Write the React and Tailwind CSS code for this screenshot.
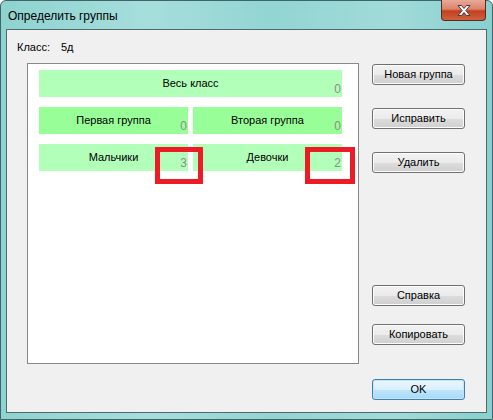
import React from "react";

function WinButton({ children, primary, className = "" }) {
  return (
    <div
      className={
        "h-[21px] w-[93px] rounded-[3px] border flex items-center justify-center text-[11px] text-black " +
        (primary
          ? "border-[#3c7fb1] bg-[linear-gradient(#eaf6fd_0%,#d9f0fc_50%,#bee6fd_51%,#a7d9f5_100%)] shadow-[inset_0_0_0_1px_#c4e5f6]"
          : "border-[#707070] bg-[linear-gradient(#f2f2f2_0%,#ebebeb_50%,#dddddd_51%,#cfcfcf_100%)] shadow-[inset_0_0_0_1px_#fcfcfc]") +
        " " +
        className
      }
    >
      {children}
    </div>
  );
}

function Tile({ label, count, bright, className = "" }) {
  return (
    <div
      className={
        "relative h-[27px] flex items-center justify-center text-[11px] text-black " +
        (bright ? "bg-[#98ff98]" : "bg-[#b2ffba]") +
        " " +
        className
      }
    >
      <span>{label}</span>
      <span className="absolute right-[1px] bottom-[1px] text-[12px] leading-[13px] text-[#8c8c8c]">
        {count}
      </span>
    </div>
  );
}

export default function App() {
  return (
    <div
      className="relative w-[493px] h-[420px] flex flex-col bg-[linear-gradient(90deg,#8ed3d1_0%,#a6dedc_30%,#92d5d3_55%,#a0dbd9_80%,#88d0ce_100%)] border border-[#3f6566] rounded-t-[6px]"
      style={{ fontFamily: '"Liberation Sans", Arial, sans-serif' }}
    >
      {/* title bar */}
      <div className="h-[28px] flex items-center pl-[7px] pt-[1px] text-[12px] text-black shrink-0">
        Определить группы
      </div>
      <div className="absolute top-[-1px] right-[6px] w-[45px] h-[21px] rounded-b-[4px] border border-t-0 border-[#5a2a22] bg-[linear-gradient(#eaa998_0%,#d9846e_45%,#c2401f_55%,#d0603f_100%)] flex items-center justify-center">
        <svg width="16" height="13" viewBox="0 0 16 13">
          <path
            d="M2 1.5h3.5L8 4.5l2.5-3H14l-4.2 5 4.2 5h-3.5L8 8.5l-2.5 3H2l4.2-5z"
            fill="#ffffff"
            stroke="#4a3a3a"
            strokeWidth="1"
            strokeLinejoin="round"
          />
        </svg>
      </div>

      {/* client area */}
      <div className="flex-1 mx-[5px] mb-[6px] border border-[#4e6a6c] bg-[#f0f0f0] flex flex-col">
        <div className="h-[33px] pt-[11px] pl-[10px] text-[11px] leading-[13px] text-black flex">
          <span className="w-[44px]">Класс:</span>
          <span>5д</span>
        </div>
        <div className="flex">
          <div className="ml-[20px] w-[332px] h-[301px] border border-[#8a8a8a] bg-white pt-[6px] pl-[11px] flex flex-col gap-[10px]">
            <Tile label="Весь класс" count="0" className="w-[303px]" />
            <div className="flex gap-[5px]">
              <Tile label="Первая группа" count="0" bright className="w-[149px]" />
              <Tile label="Вторая группа" count="0" bright className="w-[149px]" />
            </div>
            <div className="flex gap-[5px]">
              <Tile label="Мальчики" count="3" className="w-[149px]" />
              <Tile label="Девочки" count="2" className="w-[149px]" />
            </div>
          </div>
          <div className="ml-[13px] flex flex-col">
            <WinButton className="mt-[1px]">Новая группа</WinButton>
            <WinButton className="mt-[23px]">Исправить</WinButton>
            <WinButton className="mt-[23px]">Удалить</WinButton>
            <WinButton className="mt-[112px]">Справка</WinButton>
            <WinButton className="mt-[18px]">Копировать</WinButton>
            <WinButton primary className="mt-[34px]">
              OK
            </WinButton>
          </div>
        </div>
      </div>

      {/* red annotation boxes */}
      <div className="absolute left-[154px] top-[146px] w-[48px] h-[37px] border-[5px] border-[#ed1c24]" />
      <div className="absolute left-[304px] top-[146px] w-[50px] h-[37px] border-[5px] border-[#ed1c24]" />
    </div>
  );
}
